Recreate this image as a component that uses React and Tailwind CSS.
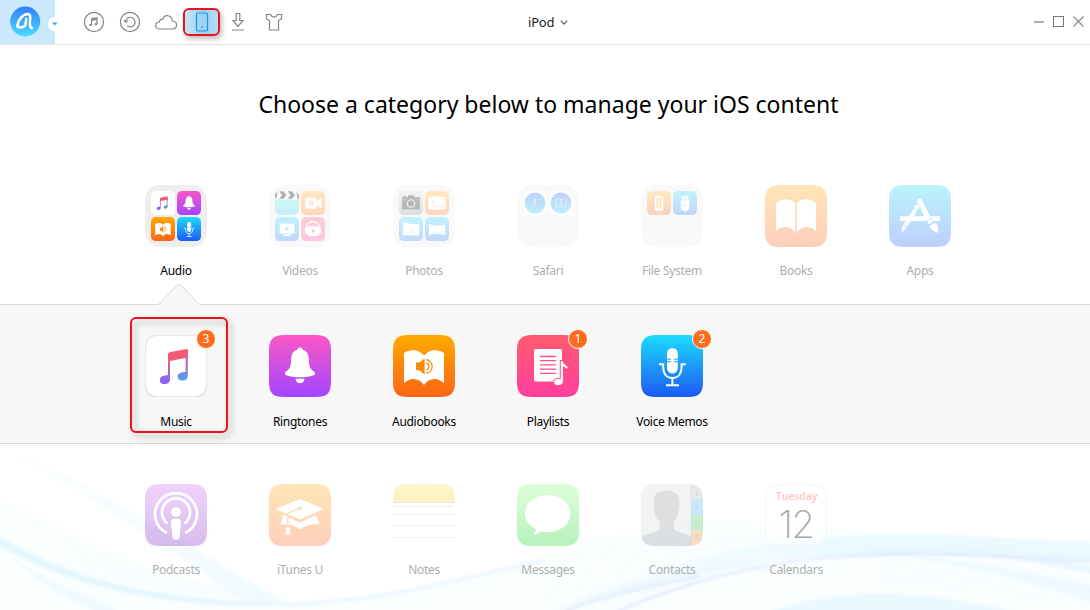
import React from "react";

const TILE = "M15 0H47C58 0 62 5 62 15V47C62 58 58 62 47 62H15C4 62 0 58 0 47V15C0 5 4 0 15 0Z";

function Tile({ id, from, to, size = "size-[62px]", children }) {
  return (
    <svg viewBox="0 0 62 62" className={`${size} block`}>
      <defs>
        <linearGradient id={id} x1="0" y1="0" x2="0" y2="1">
          <stop offset="0" stopColor={from} />
          <stop offset="1" stopColor={to} />
        </linearGradient>
      </defs>
      <path d={TILE} fill={`url(#${id})`} />
      {children}
    </svg>
  );
}

const SMALL = "size-6";

function Music({ id, size, plain }) {
  return (
    <Tile id={id} from="#fff" to="#fff" size={size}>
      {!plain && <path d={TILE} fill="none" stroke="#e6e6e6" strokeWidth="1.6" />}
      <defs>
        <linearGradient id={`${id}n`} gradientUnits="userSpaceOnUse" x1="32" y1="14" x2="32" y2="50">
          <stop offset="0" stopColor="#fb5566" />
          <stop offset="0.35" stopColor="#e8607f" />
          <stop offset="0.75" stopColor="#8d6be6" />
          <stop offset="1" stopColor="#8a5cf6" />
        </linearGradient>
        <linearGradient id={`${id}b`} gradientUnits="userSpaceOnUse" x1="38" y1="14" x2="38" y2="46">
          <stop offset="0" stopColor="#f85468" />
          <stop offset="0.5" stopColor="#b06fc0" />
          <stop offset="1" stopColor="#3fa9f8" />
        </linearGradient>
      </defs>
      <path d="M23 19.2Q23 17.6 24.6 17.3L41.6 13.9Q42.8 13.7 42.8 15V22.4L25 26V44.5C25 47.8 22.5 49 19 49C16.5 49 14.8 47.4 14.8 45.2C14.8 41 19 40.6 23 40Z" fill={`url(#${id}n)`} />
      <path d="M40.6 18L42.8 15V40.8C42.8 44 40.5 45.6 37 45.6C34.5 45.6 32.6 44 32.6 41.8C32.6 37.6 37 37.5 40.6 36.8Z" fill={`url(#${id}b)`} />
    </Tile>
  );
}

function Bell({ id, size }) {
  return (
    <Tile id={id} from="#fb57c4" to="#a246ff" size={size}>
      <path d="M31 12.5C32.6 12.5 33.4 13.4 33.6 14.8C38 16 39.6 19.5 39.8 24C40 30 40.6 34 45.5 37C47 39 45.5 40 43 40.8C36 42.8 26 42.8 19 40.8C16.500 40 15 39 16.500 37C21.400 34 22 30 22.200 24C22.400 19.500 24 16 28.400 14.800C28.600 13.400 29.400 12.500 31 12.500Z" fill="#fff" />
      <path d="M26.5 43.7H35.5C35.2 46.500 33.500 48.300 31 48.300S26.800 46.500 26.500 43.700Z" fill="#fff" />
    </Tile>
  );
}

function Audiobook({ id, size }) {
  return (
    <Tile id={id} from="#ffa900" to="#fb6516" size={size}>
      <path d="M11 18C17 14 26 14 31 20.500C36 14 45 14 51 18V48C44 42 36 43 31 50C26 43 18 42 11 48Z" fill="#fff" />
      <path d="M23 27.500H26.500L31.600 23.300V39.500L26.500 35.200H23Z" fill="#fc8a08" />
      <path d="M33.300 27.800A3.800 3.800 0 0 1 33.300 35M33.300 24.500A7 7 0 0 1 33.300 38.300" fill="none" stroke="#fc8a08" strokeWidth="1.300" />
    </Tile>
  );
}

function Mic({ id, size }) {
  return (
    <Tile id={id} from="#1bdcff" to="#1d5af3" size={size}>
      <rect x="26" y="13" width="10.800" height="25.600" rx="5.400" fill="#fff" />
      <path d="M26 24.200H30M33 24.200H37M26 26.800H30M33 26.800H37" stroke="#1f9fff" strokeWidth="1" />
      <path d="M18 29.200H22.200V32C22.200 38.500 25.500 43 31.400 43S40.600 38.500 40.600 32V29.200H44.800M31.400 43V50M25 50.300H38" fill="none" stroke="#fff" strokeWidth="2" />
    </Tile>
  );
}

function Playlist() {
  return (
    <Tile id="pl" from="#ff5b6d" to="#ff3f9f">
      <rect x="17" y="14" width="28" height="32.500" rx="1.800" fill="#fff" />
      <path d="M23 21.500H39M23 25.700H39M23 29.900H39M23 34.100H39M23 38.300H39" stroke="#ff4f80" strokeWidth="1.300" />
      <path d="M43.800 26V44C39 43 37 45 37 47.500C37 50.500 45.900 52 45.900 46V31L50.500 34V32C48 29 46 29 45.500 26Z" fill="#fff" stroke="#ff4f85" strokeWidth="2" paintOrder="stroke" />
    </Tile>
  );
}

const Folder = ({ children, faded }) => (
  <div className={`grid size-[62px] grid-cols-2 content-start gap-[2px] rounded-[15px] bg-[#eeeeee] p-[6px] ${faded ? "opacity-30" : ""}`}>
    {children}
  </div>
);

const Faded = ({ children }) => <div className="opacity-30">{children}</div>;

const AudioIcon = () => (
  <Folder>
    <Music id="am" size={SMALL} plain />
    <Bell id="ab" size={SMALL} />
    <Audiobook id="aa" size={SMALL} />
    <Mic id="av" size={SMALL} />
  </Folder>
);

const VideosIcon = () => (
  <Folder faded>
    <svg viewBox="0 0 24 24" className="size-6">
      <defs>
        <linearGradient id="clap" x1="0" y1="0" x2="0" y2="1">
          <stop offset="0" stopColor="#50f0c8" />
          <stop offset="1" stopColor="#58c4fa" />
        </linearGradient>
      </defs>
      <path d="M0 8.500H24V18Q24 24 18 24H6Q0 24 0 18Z" fill="url(#clap)" />
      <path d="M0 3L2.500 1L1.500 7H0ZM4 .3H8.300L11.500 4L8.500 7.700H4.200L7.200 4ZM12.500 .3H16.800L20 4L17 7.700H12.700L15.700 4ZM21.500 1L24 4V7.700H22.500Z" fill="#000" />
    </svg>
    <Tile id="vv" from="#ffb32c" to="#fb7b2c" size={SMALL}>
      <rect x="11" y="17" width="29" height="29" rx="4" fill="#fff" />
      <path d="M40 27L53 17V46L40 36Z" fill="#fff" />
      <circle cx="26" cy="31" r="7" fill="#fba13c" />
      <path d="M26 26V36M21 31H31" stroke="#fff" strokeWidth="2" />
    </Tile>
    <Tile id="vt" from="#32d8fa" to="#3a78f0" size={SMALL}>
      <rect x="12" y="17" width="38" height="26" fill="#fff" />
      <path d="M21 47H41" stroke="#fff" strokeWidth="4" />
      <path d="M27 24L37 30L27 36Z" fill="#3aa6f6" />
    </Tile>
    <Tile id="vm" from="#fb6272" to="#fb49a0" size={SMALL}>
      <path d="M13 30A18 18 0 0 1 49 30" stroke="#fff" strokeWidth="3" fill="none" />
      <rect x="10" y="27" width="42" height="17" rx="5" fill="#fff" />
      <rect x="17" y="24" width="28" height="25" rx="3" fill="#fff" />
      <path d="M28 30L38 36L28 42Z" fill="#fb5588" />
    </Tile>
  </Folder>
);

const PhotosIcon = () => (
  <Folder faded>
    <Tile id="pc" from="#dcdfe2" to="#8f9296" size={SMALL}>
      <path d="M8 16H12V13H18V16H22L25 11H37L41 16H54V48H8Z" fill="#17191c" />
      <circle cx="31" cy="32" r="9.500" fill="none" stroke="#d8d8d8" strokeWidth="3" />
      <path d="M8 23H20M42 23H54" stroke="#777" strokeWidth="2" />
    </Tile>
    <Tile id="pp" from="#ffb32c" to="#fb7b2c" size={SMALL}>
      <path d="M11 18Q30 14 51 18V44Q30 48 11 44Z" fill="#fff" stroke="#fff" strokeWidth="5" strokeLinejoin="round" />
      <circle cx="20" cy="28" r="3" fill="#fb9440" />
      <path d="M13 42L28 35L34 38L50 28V44Z" fill="#fde3c6" />
    </Tile>
    <Tile id="pf" from="#32d8fa" to="#3a88f0" size={SMALL}>
      <path d="M10 14H24L27 18H52V47H10Z" fill="#fff" />
      <path d="M14 44L23 36L28 39L38 32L47 44Z" fill="#d6effc" />
      <circle cx="31" cy="31" r="4" fill="#b5e1fb" />
    </Tile>
    <Tile id="pw" from="#32d8fa" to="#3a78f0" size={SMALL}>
      <path d="M10 18Q31 27 52 18V47Q31 39 10 47Z" fill="#fff" />
      <path d="M10 44L24 34L36 39L52 33V46Q31 39 10 46Z" fill="#d6edfd" />
    </Tile>
  </Folder>
);

const SafariIcon = () => (
  <Folder faded>
    {[0, 1].map((n) => (
      <Tile key={n} id={`sf${n}`} from="#fff" to="#fff" size={SMALL}>
        <defs>
          <linearGradient id={`sg${n}`} x1="0" y1="0" x2="0" y2="1">
            <stop offset="0" stopColor="#2b6cf2" />
            <stop offset="1" stopColor="#1dcaf9" />
          </linearGradient>
        </defs>
        <circle cx="31" cy="31" r="27" fill={`url(#sg${n})`} />
        {n === 0 ? (
          <g>
            <path d="M29.500 34L31 18L32.500 34Z" fill="#fff" stroke="#fff" />
            <path d="M31 30L44 33L31 36Z" fill="#f33" />
          </g>
        ) : (
          <g>
            <path d="M31 22Q24 18 18 21V41Q24 38 31 42Q38 38 44 41V21Q38 18 31 22V41" fill="none" stroke="#c4e0ff" strokeWidth="2.200" />
            <path d="M37 19H43V26L40 24L37 26Z" fill="#f33" />
          </g>
        )}
      </Tile>
    ))}
  </Folder>
);

const FilesIcon = () => (
  <Folder faded>
    <Tile id="fp" from="#ffb32c" to="#fb6b2c" size={SMALL}>
      <rect x="20" y="12" width="22" height="39" rx="4" fill="#fff" />
      <rect x="23" y="17" width="16" height="26" fill="#fcb56b" />
      <circle cx="31" cy="47" r="1.800" fill="#fb9450" />
    </Tile>
    <Tile id="fu" from="#32d8fa" to="#3a78f0" size={SMALL}>
      <path d="M22 13H40V22H22ZM20 24H42V43Q40 51 31 52Q22 51 20 43Z" fill="#fff" />
      <path d="M27 17H29M33 17H35" stroke="#49a8f5" strokeWidth="3" />
      <path d="M31 30V46M26 34V38L31 42L36 38V33" fill="none" stroke="#8fcbf8" strokeWidth="2" />
    </Tile>
  </Folder>
);

const BooksIcon = () => (
  <Faded>
    <Tile id="bk" from="#ffab10" to="#fb6223">
      <path d="M11 18C17 13 26 13 30.200 18V48.500C27 41 17 40 11 46ZM51 18C45 13 36 13 31.800 18V48.500C35 41 45 40 51 46Z" fill="#fff" />
    </Tile>
  </Faded>
);

const AppsIcon = () => (
  <Faded>
    <Tile id="ap" from="#1bdcff" to="#2862f4">
      <path d="M11 31.200H51V36H11Z" fill="#fff" />
      <g stroke="#1f9bf9" strokeWidth="1">
        <path d="M28.200 16L32.300 13.800L42 33L37.500 36.500Z" fill="#fff" stroke="none" />
        <circle cx="30.500" cy="16" r="2.600" fill="#fff" stroke="none" />
        <path d="M37.600 36L42.300 33L44.400 37L39.700 40Z" fill="#fff" />
        <path d="M40.500 41L46 37.800C49.500 40 49.200 43 49 48C45.500 46.500 42 46 40.500 41Z" fill="#fff" stroke="none" />
        <path d="M26.500 20.500L30.200 22.500L18.200 42L12.500 48L13.500 41Z" fill="#fff" stroke="none" />
        <circle cx="28.300" cy="21.800" r="2.200" fill="#fff" stroke="none" />
        <path d="M25 23.500L29.300 26" />
        <path d="M13.500 40.500L18.500 42.500" />
      </g>
    </Tile>
  </Faded>
);

const PodcastsIcon = () => (
  <Faded>
    <Tile id="pd" from="#cf6cf9" to="#7f27c0">
      <path d="M21.800 49A21 21 0 1 1 40.200 49" fill="none" stroke="#fff" strokeWidth="2.800" />
      <path d="M22.500 39.600A14 14 0 1 1 39.500 39.600" fill="none" stroke="#fff" strokeWidth="2.800" />
      <circle cx="31" cy="28" r="5" fill="#fff" />
      <path d="M31 34.500C35 34.500 36.400 36 36 40L34.600 52C34.300 54.800 33.500 56 31 56S27.700 54.800 27.400 52L26 40C25.600 36 27 34.500 31 34.500Z" fill="#fff" />
    </Tile>
  </Faded>
);

const ITunesIcon = () => (
  <Faded>
    <Tile id="iu" from="#ffab10" to="#fb6223">
      <path d="M6.500 25L31 15L55 25L31 35.500Z" fill="#fff" />
      <path d="M14.500 31L31 38.500L47 31L50.500 40.500C43 39.500 36 41 31.500 45.500C26 41 19 39.500 11.500 40.500Z" fill="#fff" />
      <circle cx="31" cy="24" r="2" fill="#fc9640" />
      <path d="M31 24L18.800 29.500V43" fill="none" stroke="#fc9640" strokeWidth="1.700" />
      <path d="M17 51V45Q17 43 19 43T21 45V51Z" fill="#fff" />
    </Tile>
  </Faded>
);

const NotesIcon = () => (
  <Faded>
    <svg viewBox="0 0 62 62" className="block size-[62px]">
      <defs>
        <linearGradient id="nt" x1="0" y1="0" x2="0" y2="1">
          <stop offset="0" stopColor="#ffe35c" />
          <stop offset="1" stopColor="#fccd2e" />
        </linearGradient>
      </defs>
      <path d={TILE} fill="#fff" />
      <path d="M0 18V15C0 5 4 0 15 0H47C58 0 62 5 62 15V18Z" fill="url(#nt)" />
      <path d="M0 18.500H62" stroke="#c9c3ae" />
      <path d="M1 22.500H61" stroke="#999" strokeDasharray="1 1" />
      <path d="M.5 30.500H61.500M.5 41.500H61.500M.5 53.500H61.500" stroke="#d0d0d0" />
    </svg>
  </Faded>
);

const MessagesIcon = () => (
  <Faded>
    <Tile id="ms" from="#8ffb7c" to="#15d526">
      <path d="M31 11C43.500 11 53.500 19 53.500 29.500S43.500 48 31 48C28.500 48 26 47.700 24 47C21.500 49.500 19 50.700 16 51C18 49 18.800 47 18.800 45C12 41.500 8 36 8 29.500C8 19 18.500 11 31 11Z" fill="#fff" />
    </Tile>
  </Faded>
);

const ContactsIcon = () => (
  <Faded>
    <svg viewBox="0 0 62 62" className="block size-[62px]">
      <defs>
        <clipPath id="ct"><path d={TILE} /></clipPath>
      </defs>
      <g clipPath="url(#ct)">
        <path d="M0 0H50V62H0Z" fill="#d9dadb" />
        <path d="M0 62V53C8 49 16 48 18.500 45.500V38C15.500 35 14 31 13 26C12 18 13 12 15 10C19 5.500 33 5.500 37 11C39.500 16 39 24 37 29C36.500 34 34.500 36 33 38V45.500C36 48 44 49 50 53V62Z" fill="#96999d" />
        <path d="M50 0H62V15.500H50Z" fill="#b9b8b0" />
        <path d="M50 15.500H62V31H50Z" fill="#45bcf8" />
        <path d="M50 31H62V46.500H50Z" fill="#3ecb65" />
        <path d="M50 46.500H62V62H50Z" fill="#fb922e" />
        <path d="M50 0V62M50 15.500H62M50 31H62M50 46.500H62" stroke="#777" strokeWidth=".7" opacity=".6" />
        <g fontFamily="Liberation Sans, sans-serif" fontSize="5" fill="#555" textAnchor="middle">
          <text x="56" y="11.500">A</text>
          <text x="56" y="25.200">B</text>
          <text x="56" y="40.800">C</text>
          <text x="56" y="54.500">D</text>
        </g>
      </g>
    </svg>
  </Faded>
);

const CalendarIcon = () => (
  <div className="flex size-[62px] flex-col items-center rounded-[14px] border border-[#f5f5f5] bg-white/50 font-['Open_Sans',sans-serif]">
    <span className="mt-[4px] h-[15px] pl-px text-[10.5px] leading-[15px] font-semibold tracking-[-0.1px] text-[#ffc4c2]">Tuesday</span>
    <span className="font-['Inter',sans-serif] text-[38px] leading-[40px] font-extralight tracking-[-1.5px] text-[#a9a9a9]">12</span>
  </div>
);

function Item({ label, icon, badge, active, gap = "mt-[15px]" }) {
  return (
    <div className="flex w-[124px] flex-col items-center">
      <div className="relative">
        {icon}
        {badge && (
          <span className="absolute -top-[6px] -right-[9px] flex size-[20px] items-center justify-center rounded-full border border-[#fbfbfb] bg-[#ff6b1a] text-[12px] leading-none text-white">
            {badge}
          </span>
        )}
      </div>
      <span className={`${gap} text-[12px] leading-[18px] tracking-[-0.3px] whitespace-nowrap ${active ? "text-black" : "text-[#aeaeae]"}`}>{label}</span>
    </div>
  );
}

function Waves() {
  return (
    <svg viewBox="0 0 1090 166" className="absolute inset-0 h-[166px] w-full" fill="none">
      <defs>
        <linearGradient id="wl" x1="0" y1="0" x2="0" y2="1">
          <stop offset="0" stopColor="#e6f8ff" stopOpacity=".85" />
          <stop offset="1" stopColor="#f6fcff" stopOpacity=".4" />
        </linearGradient>
        <linearGradient id="wd" x1="0" y1="0" x2="1" y2="1">
          <stop offset="0" stopColor="#fcfeff" />
          <stop offset="1" stopColor="#effaff" />
        </linearGradient>
        <filter id="soft"><feGaussianBlur stdDeviation="1.500" /></filter>
      </defs>
      <g filter="url(#soft)">
        <path d="M-5 55C60 70 110 130 320 168H-5Z" fill="#fbfeff" />
        <path d="M0 4C80 32 150 80 200 108C240 132 280 155 302 168H262C210 140 130 70 0 4Z" fill="url(#wd)" />
        <path d="M-5 88C60 136 180 170 330 159C430 150 500 122 590 98C680 72 790 74 900 94L1090 108V168H-5Z" fill="#fafeff" />
        <path d="M-5 90C80 140 160 156 300 160C200 168 80 150 -5 100Z" fill="#e4f6ff" />
        <path d="M10 112C50 140 90 152 120 168H95C60 150 30 134 10 112Z" fill="#effaff" />
        <path d="M280 161C390 156 450 137 545 116" stroke="#e6f6ff" strokeWidth="3" />
        <path d="M545 168C680 110 790 84 970 92L1095 98V118C960 102 820 104 740 124C680 142 640 156 610 168Z" fill="url(#wl)" />
        <path d="M550 168C700 110 820 102 1095 117V112C940 94 780 96 550 168Z" fill="#e9f7ff" />
        <path d="M940 109C1000 112 1050 120 1095 131V124C1050 114 1000 110 940 109Z" fill="#e9f7ff" />
        <path d="M900 112C980 118 1040 130 1095 143V160C1020 134 960 120 900 112Z" fill="#edf9ff" />
        <path d="M770 168C830 144 920 144 1015 168Z" fill="#ebf8ff" />
        <path d="M565 167C610 150 640 145 700 132M618 167C760 108 860 102 1090 118" stroke="#dde3ff" strokeWidth="2" />
      </g>
      <g stroke="#f0fafe" strokeWidth=".6" opacity=".8">
        {[0, 1, 2, 3, 4, 5, 6].map((n) => (
          <path key={n} d={`M0 ${60 + n * 5}C60 ${88 + n * 6} 120 ${130 + n * 3} 270 ${150 + n}M545 ${120 + n * 6}C620 ${94 + n * 7} 680 ${88 + n * 5} 800 ${90 + n * 3}M880 ${115 + n * 4}Q980 ${112 + n * 6} 1090 ${137 + n * 4}`} />
        ))}
      </g>
    </svg>
  );
}

function Header() {
  return (
    <header className="flex h-[45px] shrink-0 items-stretch border-b border-[#e1e1e1] bg-white">
      <div className="relative flex w-[55px] items-start bg-[#cce8fc] pt-[6px] pl-[10px]">
        <svg viewBox="0 0 31 31" className="size-[31px]">
          <defs>
            <linearGradient id="lg" x1="0" y1="0" x2="0" y2="1">
              <stop offset="0" stopColor="#2f80fb" />
              <stop offset="1" stopColor="#4bdcff" />
            </linearGradient>
          </defs>
          <circle cx="15.200" cy="15.500" r="15" fill="url(#lg)" />
          <path d="M7.200 20.500C8 13.500 13 8 18 8C20.800 8.200 20.300 12 20 15.500C19.700 19 20.300 21.500 21.800 22M16.300 12.800L15.300 19.800C12.500 21.500 9.500 22 7.200 20.500" fill="none" stroke="#fff" strokeWidth="2.500" strokeLinecap="round" strokeLinejoin="round" />
        </svg>
        <span className="absolute top-[17px] -right-[7px] flex size-[14px] items-center justify-center rounded-full bg-white">
          <svg viewBox="0 0 6 4" className="h-[4px] w-[6px]"><path d="M0 .5H5.500L2.700 3.500Z" fill="#3aa5e8" /></svg>
        </span>
      </div>
      <nav className="flex flex-1 items-center pl-[28px] pb-px text-[#858585]">
        <svg viewBox="0 0 22 22" className="size-[22px]" fill="none" stroke="currentColor" strokeWidth="1.200">
          <circle cx="11" cy="11" r="9.600" />
          <path d="M8.500 14V7.800L14 6.800V13M8.500 9.300L14 8.300" />
          <ellipse cx="7.500" cy="14" rx="1.400" ry="1.100" fill="currentColor" stroke="none" />
          <ellipse cx="13" cy="13.200" rx="1.400" ry="1.100" fill="currentColor" stroke="none" />
        </svg>
        <svg viewBox="0 0 22 22" className="ml-[14px] size-[22px]" fill="none" stroke="currentColor" strokeWidth="1.200">
          <circle cx="11" cy="11" r="9.600" />
          <path d="M6.500 10.500A4.800 4.800 0 1 1 8 14.600M4.800 9L6.500 11.300L8.800 9.800" />
        </svg>
        <svg viewBox="0 0 24 22" className="ml-[13px] h-[22px] w-[24px]" fill="none" stroke="currentColor" strokeWidth="1.200">
          <path d="M6 18C0 18 .5 11 5.500 11C5.500 9 7 8 8.800 8.500C10 3 18 3.500 18.200 10C24 10 24 18 18.500 18Z" />
        </svg>
        <div className="ml-[5px] flex h-[28px] w-[37px] items-center justify-center rounded-[6px] border-[2px] border-[#ed1118] bg-[linear-gradient(90deg,#c5e6fa,#95d0f5_55%,#b6def7)] shadow-[2px_3px_5px_rgba(0,0,0,.25)]">
          <svg viewBox="0 0 14 20" className="h-[20px] w-[14px]" fill="none" stroke="#1a96e0" strokeWidth="1.200">
            <rect x="1.500" y="1" width="11" height="18" rx="1.500" />
            <path d="M6.200 15H7.800" strokeWidth="1.500" />
          </svg>
        </div>
        <svg viewBox="0 0 16 22" className="ml-[10px] h-[22px] w-[16px]" fill="none" stroke="currentColor" strokeWidth="1.200">
          <path d="M6.200 2.500H9.800V9.500H13L8 15.500L3 9.500H6.200ZM2 19H14" />
        </svg>
        <svg viewBox="0 0 20 22" className="ml-[18px] h-[22px] w-[20px]" fill="none" stroke="currentColor" strokeWidth="1.200">
          <path d="M2.500 3.500H6.500C8 7 12 7 13.500 3.500H17.500V8L14.500 9.500V19H5.500V9.500L2.500 8Z" />
        </svg>
      </nav>
      <div className="flex w-[43px] items-center gap-[6px] pt-px text-[13px] text-[#1d1d1d]">
        <span className="tracking-[-0.2px]">iPod</span>
        <svg viewBox="0 0 8 5" className="h-[5px] w-[8px] shrink-0" fill="none" stroke="#666" strokeWidth="1.200"><path d="M.8 .6L4 4L7.200 .6" /></svg>
      </div>
      <div className="flex w-[519px] items-center justify-end gap-[9px] pr-[6px] pb-px">
        <span className="h-[2px] w-[10px] bg-[#b1b1b1]" />
        <span className="size-[11px] border border-[#777]" />
        <svg viewBox="0 0 11 11" className="size-[11px]" stroke="#8c8c8c" strokeWidth="1.200"><path d="M.5 .5L10.500 10.500M10.500 .5L.5 10.500" /></svg>
      </div>
    </header>
  );
}

export default function App() {
  return (
    <div className="flex h-[610px] w-[1090px] flex-col overflow-hidden bg-white font-['Noto_Sans','Open_Sans',sans-serif]">
      <Header />
      <h1 className="mt-[41px] pl-[7px] text-center text-[23px] leading-[36px] text-black">Choose a category below to manage your iOS content</h1>
      <section className="relative mt-[63px] flex h-[119px] shrink-0 pl-[114px]">
        <Item label="Audio" icon={<AudioIcon />} active />
        <Item label="Videos" icon={<VideosIcon />} />
        <Item label="Photos" icon={<PhotosIcon />} />
        <Item label="Safari" icon={<SafariIcon />} />
        <Item label="File System" icon={<FilesIcon />} />
        <Item label="Books" icon={<BooksIcon />} />
        <Item label="Apps" icon={<AppsIcon />} />
        <svg viewBox="0 0 42 22" className="absolute -bottom-px left-[158px] z-10 h-[22px] w-[42px]">
          <path d="M0 21C3 20 3 19 5 17L18 3Q21 0 24 3L37 17C39 19 39 20 42 21V22H0Z" fill="#f7f7f7" />
          <path d="M0 21.500C3 20 3 19 5 17L18 3Q21 0 24 3L37 17C39 19 39 20 42 21.500" fill="none" stroke="#d8d8d8" />
        </svg>
      </section>
      <section className="relative flex h-[140px] shrink-0 border-t border-b border-[#d9d9d9] bg-[#f7f7f7] pt-[30px] pl-[114px]">
        <Item label="Music" icon={<Music id="m" />} badge="3" active gap="mt-[16px]" />
        <Item label="Ringtones" icon={<Bell id="r" />} active gap="mt-[16px]" />
        <Item label="Audiobooks" icon={<Audiobook id="a" />} active gap="mt-[16px]" />
        <Item label="Playlists" icon={<Playlist />} badge="1" active gap="mt-[16px]" />
        <Item label="Voice Memos" icon={<Mic id="v" />} badge="2" active gap="mt-[16px]" />
        <div className="absolute top-[12px] left-[129.5px] h-[116px] w-[98px] rounded-[6px] border-[2px] border-[#ed1118] drop-shadow-[3px_4px_3px_rgba(0,0,0,.3)]" />
      </section>
      <section className="relative h-[166px] shrink-0">
        <Waves />
        <div className="relative flex pt-[40px] pl-[114px]">
          <Item label="Podcasts" icon={<PodcastsIcon />} />
          <Item label="iTunes U" icon={<ITunesIcon />} />
          <Item label="Notes" icon={<NotesIcon />} />
          <Item label="Messages" icon={<MessagesIcon />} />
          <Item label="Contacts" icon={<ContactsIcon />} />
          <Item label="Calendars" icon={<CalendarIcon />} />
        </div>
      </section>
    </div>
  );
}
